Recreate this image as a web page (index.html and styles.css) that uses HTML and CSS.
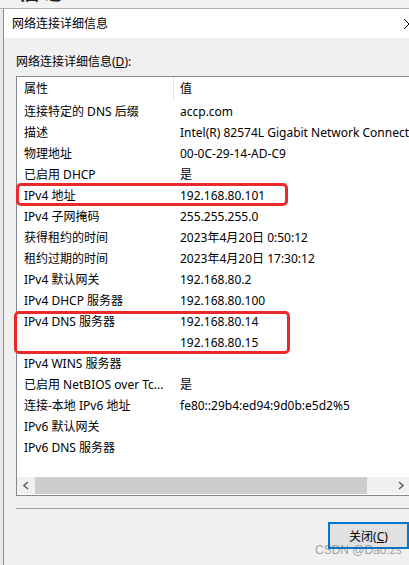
FILE: index.html
```html
<!DOCTYPE html>
<html lang="zh-CN">
  <head>
    <meta charset="UTF-8" />
    <title>网络连接详细信息</title>
    <link rel="stylesheet" href="styles.css">
  </head>
  <body>
    <div class="backdrop"><span class="backtext">信息</span></div>
    <div class="dialog">
      <div class="titlebar">
        <span>网络连接详细信息</span>
        <svg class="close" width="12" height="12" viewBox="0 0 12 12">
          <path d="M1 1 L11 11 M11 1 L1 11" stroke="#000" stroke-width="1" fill="none" />
        </svg>
      </div>
      <div class="content">
        <div class="label">网络连接详细信息(<u>D</u>):</div>
        <div class="listbox">
          <div class="grid">
            <div class="head">属性</div>
            <div class="head sep">值</div>

            <div class="cell">连接特定的 DNS 后缀</div><div class="cell val">accp.com</div>
            <div class="cell">描述</div><div class="cell val">Intel(R) 82574L Gigabit Network Connection</div>
            <div class="cell">物理地址</div><div class="cell val">00-0C-29-14-AD-C9</div>
            <div class="cell">已启用 DHCP</div><div class="cell val">是</div>
            <div class="cell">IPv4 地址</div><div class="cell val">192.168.80.101</div>
            <div class="cell">IPv4 子网掩码</div><div class="cell val">255.255.255.0</div>
            <div class="cell">获得租约的时间</div><div class="cell val">2023年4月20日 0:50:12</div>
            <div class="cell">租约过期的时间</div><div class="cell val">2023年4月20日 17:30:12</div>
            <div class="cell">IPv4 默认网关</div><div class="cell val">192.168.80.2</div>
            <div class="cell">IPv4 DHCP 服务器</div><div class="cell val">192.168.80.100</div>
            <div class="cell">IPv4 DNS 服务器</div><div class="cell val">192.168.80.14</div>
            <div class="cell"></div><div class="cell val">192.168.80.15</div>
            <div class="cell">IPv4 WINS 服务器</div><div class="cell val"></div>
            <div class="cell">已启用 NetBIOS over Tc...</div><div class="cell val">是</div>
            <div class="cell">连接-本地 IPv6 地址</div><div class="cell val">fe80::29b4:ed94:9d0b:e5d2%5</div>
            <div class="cell">IPv6 默认网关</div><div class="cell val"></div>
            <div class="cell">IPv6 DNS 服务器</div><div class="cell val"></div>
          </div>
          <div class="hscroll">
            <div class="arrow">
              <svg width="8" height="9" viewBox="0 0 8 9"><path d="M6 1 L2 4.5 L6 8" stroke="#606060" stroke-width="1.6" fill="none" /></svg>
            </div>
            <div class="thumb"></div>
            <div class="track"></div>
            <div class="arrow">
              <svg width="8" height="9" viewBox="0 0 8 9"><path d="M2 1 L6 4.5 L2 8" stroke="#606060" stroke-width="1.6" fill="none" /></svg>
            </div>
          </div>
        </div>
        <div class="rule"></div>
        <div class="buttons">
          <button class="closebtn">关闭(<u>C</u>)</button>
        </div>
      </div>
    </div>

    <div class="mark mark1"></div>
    <div class="mark mark2"></div>
    <div class="watermark">CSDN @Dao.zs</div>
  </body>
</html>
```

FILE: styles.css
```css
body {
  margin: 0;
  width: 409px;
  height: 565px;
  overflow: hidden;
  background-color: #e9e9e9;
  font-family: "Noto Sans", "Noto Sans CJK SC", sans-serif;
  font-size: 12px;
  color: #000;
  position: relative;
}
.backdrop {
  height: 8px;
  background-color: #f2f2f2;
  border-bottom: 1px solid #b0b0b0;
  overflow: hidden;
  padding-left: 18px;
}
.backtext {
  display: block;
  font-size: 22px;
  font-weight: bold;
  line-height: 22px;
  margin-top: -21px;
  color: #222;
  letter-spacing: 4px;
}
.dialog {
  margin-left: 3px;
  border-left: 1px solid #8a8a8a;
  background-color: #f0f0f0;
  height: 556px;
}
.titlebar {
  height: 29px;
  line-height: 29px;
  background-color: #fff;
  padding-left: 8px;
  display: flex;
  justify-content: space-between;
  align-items: center;
  white-space: nowrap;
}
.close {
  margin-right: -6px;
  margin-top: 1px;
}
.content {
  padding-left: 12px;
}
.label {
  margin-top: 15px;
  line-height: 18px;
  height: 18px;
}
.listbox {
  margin-top: 5px;
  width: 420px;
  height: 418px;
  border: 1px solid #828790;
  background-color: #fff;
  display: flex;
  flex-direction: column;
  justify-content: space-between;
}
.grid {
  display: grid;
  grid-template-columns: 156px 1fr;
}
.head {
  height: 24px;
  line-height: 24px;
  padding-left: 7px;
}
.sep {
  border-left: 1px solid #e5e5e5;
  padding-left: 6px;
}
.cell {
  height: 21px;
  line-height: 21px;
  padding-left: 7px;
  white-space: nowrap;
  overflow: hidden;
}
.val {
  overflow: visible;
}
.hscroll {
  height: 17px;
  display: flex;
  background-color: #f0f0f0;
  margin-bottom: 1px;
}
.arrow {
  width: 17px;
  display: flex;
  align-items: center;
  justify-content: center;
}
.thumb {
  width: 332px;
  margin-left: 1px;
  background-color: #cdcdcd;
}
.track {
  width: 25px;
}
.rule {
  margin-top: 12px;
  height: 1px;
  background-color: #a0a0a0;
}
.buttons {
  display: flex;
  padding-left: 312px;
  margin-top: 13px;
}
.closebtn {
  width: 82px;
  height: 27px;
  border: 2px solid #0078d7;
  background-color: #e1e1e1;
  font-family: "Noto Sans", "Noto Sans CJK SC", sans-serif;
  font-size: 12px;
  color: #000;
  padding: 0;
}
.mark {
  position: absolute;
  border: 3px solid #ea2a2a;
  border-radius: 5px;
}
.mark1 {
  left: 16px;
  top: 183px;
  width: 266px;
  height: 17px;
}
.mark2 {
  left: 14px;
  top: 311px;
  width: 270px;
  height: 37px;
}
.watermark {
  position: absolute;
  left: 315px;
  top: 543px;
  font-size: 12px;
  color: rgba(90, 90, 90, 0.55);
  font-family: "Liberation Sans", sans-serif;
}
```
